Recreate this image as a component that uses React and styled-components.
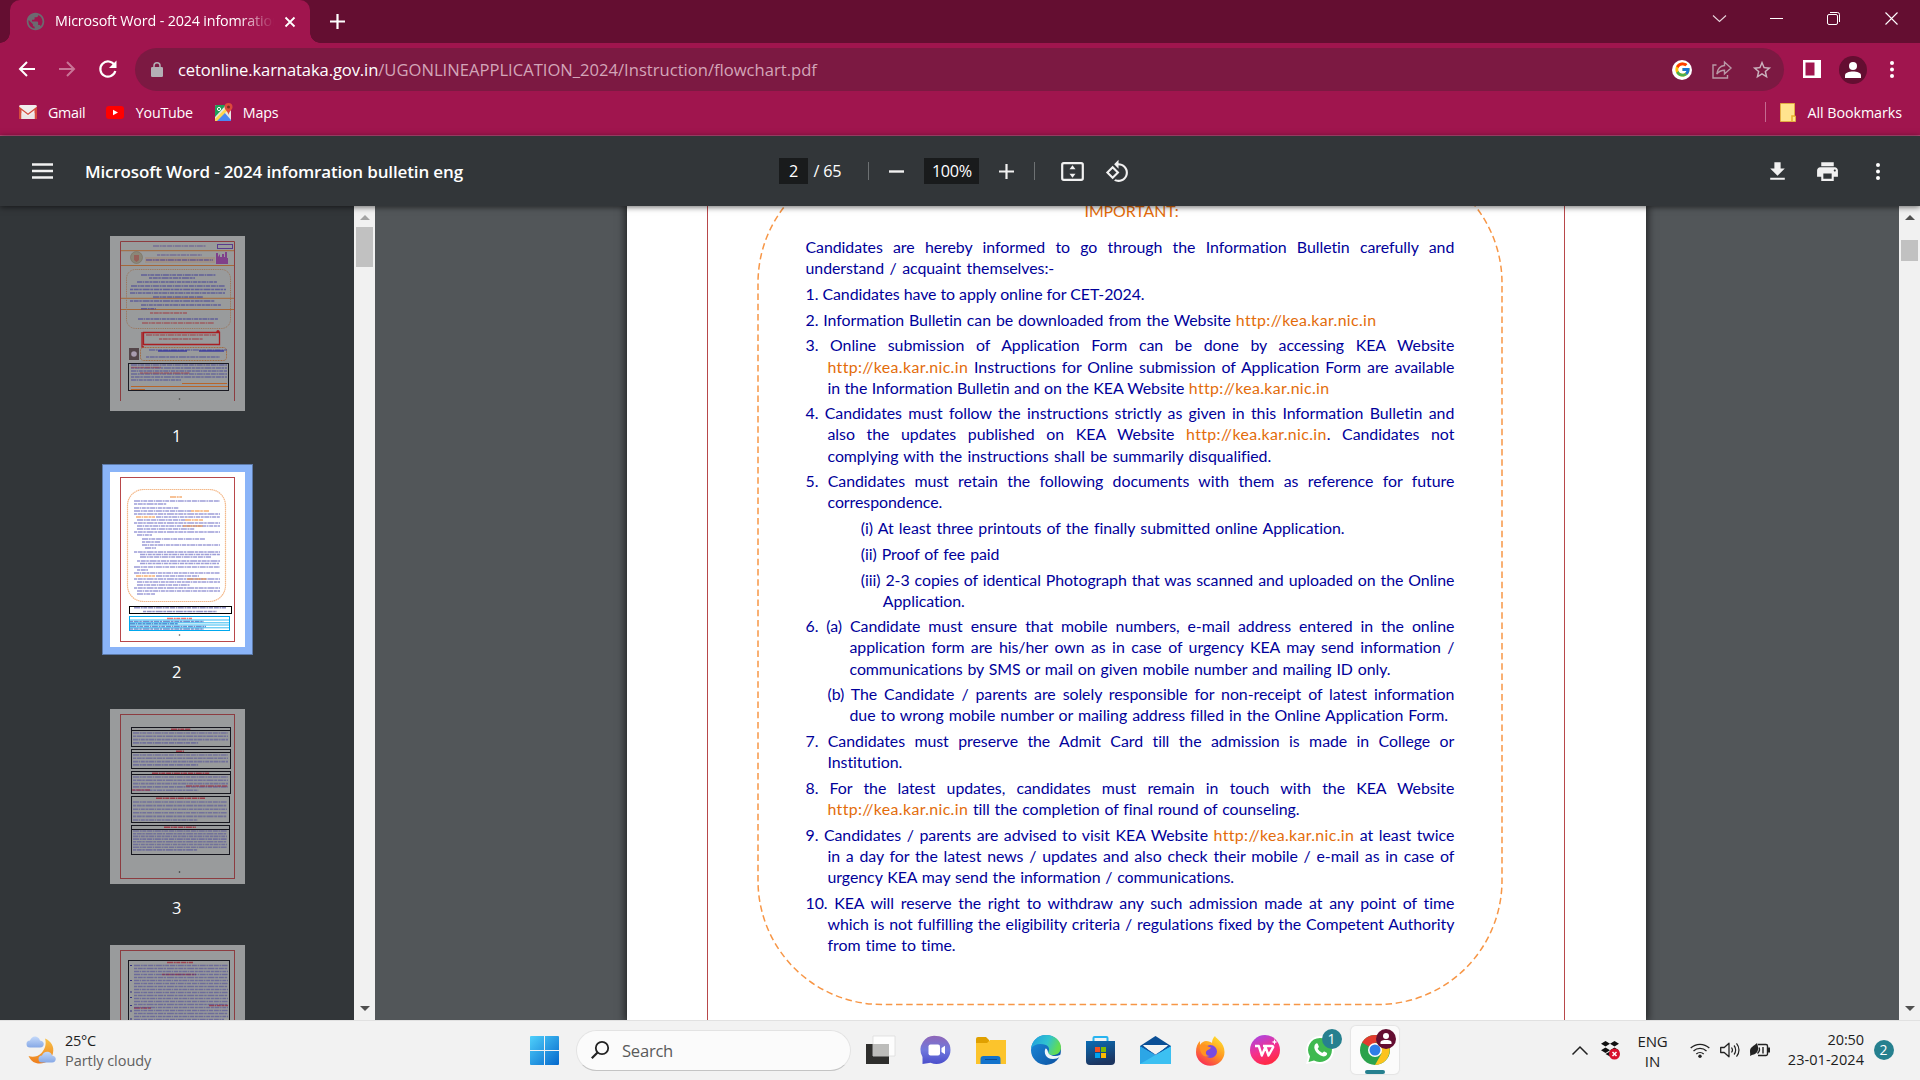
import React from "react";
import styled, { createGlobalStyle, css } from "styled-components";
import { FcGoogle } from "react-icons/fc";
import { MdPublic, MdStarBorder, MdPrint } from "react-icons/md";

const Global = createGlobalStyle`
  * { box-sizing: border-box; }
  body { margin: 0; overflow: hidden; }
`;
const ui = `"Open Sans", "Noto Sans", sans-serif`;

const Screen = styled.div`
  width: 1920px;
  height: 1080px;
  display: flex;
  flex-direction: column;
  overflow: hidden;
  font-family: ${ui};
  color: #fff;
  background: #525659;
`;

/* shared */
const Ico = styled.svg`
  display: block;
  flex: none;
  width: ${(p) => p.$w}px;
  height: ${(p) => p.$h || p.$w}px;
  margin-left: ${(p) => p.$ml || 0}px;
  margin-top: ${(p) => p.$mt || 0}px;
  overflow: visible;
`;
const Text = styled.span`
  flex: none;
  white-space: nowrap;
  font-size: ${(p) => p.$size || 14.3}px;
  letter-spacing: ${(p) => p.$ls || 0}px;
  margin-left: ${(p) => p.$ml || 0}px;
  font-weight: ${(p) => p.$weight || 400};
`;
const Spacer = styled.div`
  flex: 1;
`;

/* browser chrome */
const TabStrip = styled.div`
  height: 43px;
  flex: none;
  display: flex;
  align-items: center;
  background: #640e31;
  padding: 0 22px 0 10px;
`;
const Tab = styled.div`
  position: relative;
  width: 300px;
  height: 43px;
  display: flex;
  align-items: center;
  padding-left: 14.5px;
  background: #a0154e;
  border-radius: 10px 10px 0 0;
  &::before,
  &::after {
    content: "";
    position: absolute;
    bottom: 0;
    width: 10px;
    height: 10px;
  }
  &::before {
    left: -10px;
    background: radial-gradient(circle at 0 0, #640e31 9.5px, #a0154e 10px);
  }
  &::after {
    right: -10px;
    background: radial-gradient(circle at 100% 0, #640e31 9.5px, #a0154e 10px);
  }
`;
const TabTitle = styled.div`
  width: 219px;
  margin-left: 9.5px;
  overflow: hidden;
  white-space: nowrap;
  font-size: 14.3px;
  letter-spacing: -0.15px;
  line-height: 22px;
  padding-bottom: 2px;
  -webkit-mask-image: linear-gradient(90deg, #000 84%, transparent 100%);
  mask-image: linear-gradient(90deg, #000 84%, transparent 100%);
`;
const NavBar = styled.div`
  height: 48px;
  flex: none;
  display: flex;
  align-items: center;
  padding: 5px 26px 0 19px;
  background: #a0154e;
`;
const UrlBar = styled.div`
  width: 1650px;
  height: 43px;
  margin-left: 18px;
  display: flex;
  align-items: center;
  padding: 0 11px 0 16px;
  border-radius: 22px;
  background: #7c1942;
  color: #fff;
`;
const UrlPath = styled.span`
  color: #d3a5b8;
  letter-spacing: 0;
`;
const GBadge = styled.div`
  width: 20px;
  height: 20px;
  border-radius: 50%;
  background: #fff;
  display: flex;
  align-items: center;
  justify-content: center;
`;
const StarSlot = styled.div`
  display: flex;
  margin-left: 19px;
`;
const Avatar = styled.div`
  width: 28px;
  height: 28px;
  margin-left: 18px;
  border-radius: 50%;
  background: #640e31;
  display: flex;
  align-items: center;
  justify-content: center;
`;
const Bookmarks = styled.div`
  height: 45px;
  flex: none;
  display: flex;
  align-items: center;
  padding: 0 18px 2px 19px;
  background: #a0154e;
  border-bottom: 1px solid #b94a78;
`;
const VLine = styled.div`
  width: 1px;
  height: ${(p) => p.$h}px;
  margin-left: ${(p) => p.$ml || 0}px;
  background: ${(p) => p.$c};
`;

/* pdf toolbar */
const PdfBar = styled.div`
  position: relative;
  z-index: 2;
  height: 70px;
  flex: none;
  display: flex;
  align-items: center;
  background: #323639;
  box-shadow: 0 1px 6px rgba(0, 0, 0, 0.6);
`;
const BarZone = styled.div`
  display: flex;
  align-items: center;
  width: ${(p) => p.$w}px;
`;
const Field = styled.div`
  width: ${(p) => p.$w}px;
  height: 26px;
  margin-left: ${(p) => p.$ml || 0}px;
  background: #191b1c;
  text-align: center;
  line-height: 26px;
  font-size: 16.2px;
  letter-spacing: -0.3px;
`;
const PrintSlot = styled.div`
  display: flex;
  margin-left: 25px;
`;

/* main body */
const Body = styled.div`
  height: 814px;
  flex: none;
  display: flex;
`;
const Sidebar = styled.div`
  width: 354px;
  overflow: hidden;
  background: #323639;
  padding: 30px 0 0 110px;
`;
const ThumbItem = styled.div`
  width: 135px;
  height: 236.4px;
  display: flex;
  flex-direction: column;
  align-items: center;
`;
const ThumbBox = styled.div`
  width: 135px;
  height: 175px;
  background: ${(p) => (p.$on ? "#fff" : "#999b9c")};
  ${(p) => p.$on && css`box-shadow: 0 0 0 7px #8ab4f8, 0 0 0 8px #5d7aa8;`}
`;
const ThumbNo = styled.div`
  margin-top: 12.5px;
  margin-right: 1.5px;
  line-height: 24px;
  font-size: 16.4px;
`;
const Scroll = styled.div`
  width: 21px;
  background: #f1f1f1;
  display: flex;
  flex-direction: column;
  align-items: center;
  padding: 9px 0 9px;
`;
const Grip = styled.div`
  width: 17px;
  height: ${(p) => p.$h}px;
  margin-top: ${(p) => p.$mt}px;
  background: #c1c1c1;
`;
const Viewer = styled.div`
  width: 1524px;
  background: #525659;
  padding-left: 252px;
  overflow: hidden;
`;
const Page = styled.div`
  width: 1019px;
  height: 814px;
  padding: 0 81px 0 80px;
  background: #fff;
  box-shadow: 0 0 8px 2px rgba(0, 0, 0, 0.6);
`;
const PageFrame = styled.div`
  position: relative;
  display: flow-root;
  height: 814px;
  border: solid #b8474a;
  border-width: 0 1px;
  padding-left: 97.5px;
`;
const DashedBox = styled.svg`
  position: absolute;
  left: 0;
  top: 0;
  width: 855px;
  height: 814px;
`;
const Doc = styled.div`
  position: relative;
  width: 649px;
  font-family: Lato, "Liberation Sans", sans-serif;
  font-size: 15.9px;
  line-height: 21.1px;
  letter-spacing: -0.05px;
  color: #00009a;
`;
const Heading = styled.div`
  width: 91px;
  margin: -6px 0 15.1px 279px;
  color: #e36c0a;
  text-align-last: justify;
`;
const Para = styled.div`
  margin-bottom: 4.63px;
`;
const Line = styled.div`
  margin-left: ${(p) => p.$in}px;
  width: ${(p) => p.$r - p.$in}px;
  white-space: nowrap;
  text-align: justify;
  text-align-last: justify;
`;
const Link = styled.span`
  color: #e36c0a;
  letter-spacing: 0.36px;
`;

/* taskbar */
const Taskbar = styled.div`
  position: relative;
  z-index: 3;
  height: 60px;
  flex: none;
  display: flex;
  align-items: center;
  background: #f2f2f2;
  border-top: 1px solid #e1e1e1;
  color: #1d1d1d;
  padding-bottom: 1px;
`;
const Stack = styled.div`
  display: flex;
  flex-direction: column;
  flex: none;
  width: ${(p) => p.$w}px;
  margin-left: ${(p) => p.$ml}px;
  padding-top: ${(p) => p.$pt || 0}px;
  align-items: ${(p) => p.$align || "flex-start"};
  line-height: 20px;
`;
const Muted = styled(Text)`
  color: #606060;
`;
const SearchPill = styled.div`
  width: 275px;
  height: 41px;
  margin-left: 17px;
  border-radius: 21px;
  border: 1px solid #e3e3e3;
  border-bottom-color: #c4c4c4;
  background: #fbfbfb;
  display: flex;
  align-items: center;
  padding-left: 14px;
  color: #5a5a5a;
`;
const AppTile = styled.div`
  position: relative;
  width: 48px;
  height: 48px;
  margin-left: 17.5px;
  border-radius: 5px;
  background: #fbfbfb;
  box-shadow: 0 0 1px 1px #e4e4e4;
  display: flex;
  align-items: center;
  padding-left: 9px;
  &::after {
    content: "";
    position: absolute;
    left: 14px;
    bottom: 0;
    width: 20px;
    height: 4px;
    border-radius: 2px;
    background: #26808f;
  }
`;
const AppWrap = styled.div`
  position: relative;
  margin-left: ${(p) => p.$ml}px;
`;
const Badge = styled.div`
  width: 20px;
  height: 20px;
  border-radius: 50%;
  background: #26808f;
  color: #fff;
  font-size: 14px;
  line-height: 20px;
  text-align: center;
  margin-left: ${(p) => p.$ml || 0}px;
  ${(p) => p.$over && css`position: absolute; right: -8px; top: -7px;`}
`;

const FULL = 648.8;
const A = () => <Link>http://kea.kar.nic.in</Link>;
const paras = [
  [[0, FULL, "Candidates are hereby informed to go through the Information Bulletin carefully and"], [0, 248.7, "understand / acquaint themselves:-"]],
  [[0, 339, "1. Candidates have to apply online for CET-2024."]],
  [[0, 571, <>2. Information Bulletin can be downloaded from the Website <A /></>]],
  [
    [0, FULL, "3. Online submission of Application Form can be done by accessing KEA Website"],
    [22, FULL, <><A /> Instructions for Online submission of Application Form are available</>],
    [22, 524, <>in the Information Bulletin and on the KEA Website <A /></>],
  ],
  [
    [0, FULL, "4. Candidates must follow the instructions strictly as given in this Information Bulletin and"],
    [22, FULL, <>also the updates published on KEA Website <A />. Candidates not</>],
    [22, 465.6, "complying with the instructions shall be summarily disqualified."],
  ],
  [[0, FULL, "5. Candidates must retain the following documents with them as reference for future"], [22, 139, "correspondence."]],
  [[55.3, 539, "(i) At least three printouts of the finally submitted online Application."]],
  [[55.3, 194, "(ii) Proof of fee paid"]],
  [[55.3, FULL, "(iii) 2-3 copies of identical Photograph that was scanned and uploaded on the Online"], [77.3, 160, "Application."]],
  [
    [0, FULL, "6. (a) Candidate must ensure that mobile numbers, e-mail address entered in the online"],
    [44, FULL, "application form are his/her own as in case of urgency KEA may send information /"],
    [44, 585, "communications by SMS or mail on given mobile number and mailing ID only."],
  ],
  [
    [22, FULL, "(b) The Candidate / parents are solely responsible for non-receipt of latest information"],
    [44, 642.5, "due to wrong mobile number or mailing address filled in the Online Application Form."],
  ],
  [[0, FULL, "7. Candidates must preserve the Admit Card till the admission is made in College or"], [22, 98, "Institution."]],
  [[0, FULL, "8. For the latest updates, candidates must remain in touch with the KEA Website"], [22, 494, <><A /> till the completion of final round of counseling.</>]],
  [
    [0, FULL, <>9. Candidates / parents are advised to visit KEA Website <A /> at least twice</>],
    [22, FULL, "in a day for the latest news / updates and also check their mobile / e-mail as in case of"],
    [22, 428.5, "urgency KEA may send the information / communications."],
  ],
  [
    [0, FULL, "10. KEA will reserve the right to withdraw any such admission made at any point of time"],
    [22, FULL, "which is not fulfilling the eligibility criteria / regulations fixed by the Competent Authority"],
    [22, 150, "from time to time."],
  ],
];

const dashes = ["6 .7 2 .6 4 .8 5 .7 1.5 .6", "3 .7 5 .6 2.5 .8 7 .7", "5 .6 1.5 .7 4 .7 3 .6"];
const Rows = ({ rows, color = "#3a3898", o = 0.42 }) =>
  rows.map(([x, y, w, c], i) => (
    <line key={i} x1={x} x2={x + w} y1={y} y2={y} stroke={c || color} strokeOpacity={o} strokeWidth="1.6" strokeDasharray={dashes[i % 3]} />
  ));
const block = (x, y, w, n, gap, last) => Array.from({ length: n }, (_, i) => [x, y + i * gap, i === n - 1 && last ? last : w]);

const Thumb1 = () => (
  <svg width="135" height="175" viewBox="0 0 135 175">
    <path d="M10.500 165V5.500h114V165" fill="none" stroke="#8c3c40" />
    <Rows rows={[[43, 10, 53, "#5a4a8c"], [47, 19, 45, "#5a4a8c"]]} o={0.55} />
    <rect x="35" y="21" width="70" height="6" fill="#a58a78" opacity=".6" />
    <Rows rows={[[36, 24, 67, "#463c96"]]} o={0.65} />
    <rect x="107.500" y="8.500" width="15" height="4" fill="none" stroke="#5a3c8c" />
    <path d="M11 14.700h113M11 29.500h113M11 62.300h113M11 73.500h113" stroke="#a5683a" />
    <circle cx="26.500" cy="21.500" r="6" fill="#8b8678" stroke="#77705f" strokeWidth=".6" />
    <path d="M24 19h5v5l-2.500 2-2.500-2z" fill="#96605a" />
    <path d="M106 28V17h2v4l2-3v3h2v-3h2v3h1v-5h2v6h1v6z" fill="#80408a" />
    <rect x="16.500" y="33.500" width="104" height="59" rx="9" fill="none" stroke="#9c7458" strokeDasharray="1 .8" />
    <Rows rows={[[31, 39, 75], [39, 42, 46], [27, 46, 80], [21, 50, 94], [20, 53.500, 96], [20, 57, 95], [43, 61, 50], [20, 65, 85], [31, 69, 80], [31, 72.700, 15], [40, 77, 37, "#a03038"], [28, 83, 80], [32, 87, 72, "#a03038"]]} o={0.6} />
    <path d="M33.500 96.500h76v12h-76zM32 96v15h2" fill="none" stroke="#a91e22" strokeWidth="1.300" />
    <circle cx="108" cy="95.500" r="1.600" fill="#a91e22" />
    <Rows rows={[[36, 99, 70, "#a03038"], [49, 103, 44, "#a03038"]]} o={0.6} />
    <rect x="19" y="112" width="10" height="12" fill="#54464a" />
    <circle cx="24" cy="118" r="2.800" fill="#a99cb0" />
    <rect x="30.500" y="111.500" width="86" height="13" rx="3" fill="none" stroke="#a5683a" strokeDasharray="1 .6" />
    <Rows rows={[[39, 114, 78], [36, 121, 74]]} o={0.5} />
    <path d="M48 115h29M89 115h25" stroke="#1414a0" />
    <rect x="18.500" y="127.500" width="100" height="27" fill="none" stroke="#1a1a22" />
    <Rows rows={[...block(21, 129, 96, 6, 3, 50), [21, 131.500, 30, "#a03038"], [30, 137, 50, "#a03038"]]} o={0.5} />
    <path d="M72 147.500h45M21 150.500h97M21 153.500h14" stroke="#b8652a" />
    <circle cx="69.500" cy="163" r=".8" fill="#444" />
  </svg>
);
const thumb2 = [
  [24, 29, 86], [24, 32, 33], [24, 36, 45], [24, 39, 57], [24, 42, 86], [46, 45, 64], [27, 48, 48], [24, 51, 86], [27, 54, 83], [27, 57, 58], [24, 60, 86], [27, 63, 15],
  [32, 67, 63], [32, 70, 18], [32, 73, 78], [35, 76, 11], [24, 80, 86], [30, 82.500, 80], [30, 85, 71], [27, 89, 83], [30, 91.500, 79], [24, 95, 86], [27, 98, 11], [24, 101, 86],
  [46, 104, 43], [24, 107, 86], [27, 110, 83], [27, 113, 53], [24, 116, 86], [27, 119, 83], [27, 122, 18],
];
const Thumb2 = () => (
  <svg width="135" height="175" viewBox="0 0 135 175">
    <rect x="10.500" y="5.500" width="114" height="164" fill="none" stroke="#b8474a" />
    <rect x="17.500" y="17.500" width="98" height="112" rx="16" fill="none" stroke="#f4b98a" strokeWidth="1.200" strokeDasharray="1.500 .5" />
    <Rows rows={thumb2} color="#2a2aa8" o={0.46} />
    <Rows rows={[[60, 25, 12], [81, 39, 18], [26, 45, 19], [75, 48, 18], [73, 54, 20], [26, 104, 19], [77, 107, 20]]} color="#f08a38" o={0.7} />
    <rect x="19.500" y="134.500" width="102" height="7" fill="none" stroke="#000" />
    <Rows rows={[[24, 135.700, 92], [33, 139.500, 74]]} color="#2a2a90" o={0.5} />
    <rect x="19.500" y="144.500" width="100" height="14" fill="none" stroke="#00a8ee" />
    <Rows rows={[[57, 146.500, 25, "#e03030"], [20, 149.500, 74], [20, 151.700, 48], [20, 154.500, 76], [20, 157, 74]]} color="#2a50b0" o={0.65} />
    <path d="M20 148h99M20 150.800h99M20 153h99M20 155.800h99" stroke="#00a8ee" strokeWidth=".8" />
    <circle cx="69.500" cy="163" r=".8" fill="#555" />
  </svg>
);
const t3 = [[21, 18.500, 99, 19, 3.300, 4], [21, 40.500, 99, 19, 3.300, 4], [21, 62.500, 99, 22, 3.300, 5], [21, 87.500, 98, 26, 3.600, 6], [21, 116.500, 98, 29, 2.700, 8]];
const t3heads = [[61, 20], [66, 8], [42, 58], [46, 49], [54, 32]];
const Thumb3 = () => (
  <svg width="135" height="175" viewBox="0 0 135 175">
    <rect x="10.500" y="5.500" width="114" height="164" fill="none" stroke="#8c3c40" />
    {t3.map(([x, y, w, h, g, n], i) => (
      <g key={i}>
        <rect x={x + 0.5} y={y} width={w} height={h} fill="none" stroke="#16161e" />
        <path d={`M${x} ${y + (i > 3 ? 4 : 3)}h${w}`} stroke="#16161e" strokeWidth={i === 3 ? 0 : 1} />
        <Rows rows={[[t3heads[i][0], y + 1.700, t3heads[i][1], "#a02030"]]} o={0.75} />
        <Rows rows={block(x + 2, y + 5.500, w - 4, n, g, w * 0.66)} />
      </g>
    ))}
    <Rows rows={[[76, 77, 42, "#a02030"], [22, 81, 18, "#a02030"]]} o={0.6} />
    <circle cx="69.500" cy="163" r=".8" fill="#333" />
  </svg>
);
const Thumb4 = () => (
  <svg width="135" height="175" viewBox="0 0 135 175">
    <rect x="10.500" y="5.500" width="114" height="164" fill="none" stroke="#8c3c40" />
    <rect x="18.500" y="15.500" width="101" height="150" fill="none" stroke="#16161e" />
    <Rows rows={[[57, 17.500, 26, "#a02030"], [52, 29.500, 34, "#a02030"], [99, 60.500, 19, "#a02030"], [24, 63, 17, "#a02030"]]} o={0.7} />
    <Rows rows={block(24, 20.500, 94, 19, 3, 90)} o={0.48} />
    <path d="M20 20.500h2M20 35.500h2M20 47h2M20 52.500h2M20 60.500h2M20 66h2M20 74h2" stroke="#333080" />
  </svg>
);

const Up = ({ c = "#505050" }) => <Ico viewBox="0 0 10 5" $w={10} $h={5}><path d="M0 5L5 0l5 5z" fill={c} /></Ico>;
const Down = () => <Ico viewBox="0 0 10 5" $w={10} $h={5}><path d="M0 0L5 5l5-5z" fill="#505050" /></Ico>;
const Dots = ({ ml, h = 17 }) => (
  <Ico viewBox={`0 0 4 ${h}`} $w={4} $h={h} $ml={ml}>
    {[2, h / 2, h - 2].map((y) => <circle key={y} cx="2" cy={y} r="2" fill="#fff" />)}
  </Ico>
);
const Person = ({ size }) => (
  <svg width={size} height={size} viewBox="0 0 16 16"><circle cx="8" cy="4" r="4" fill="#fff" /><path d="M0 16v-2.500C0 10.500 4 9.500 8 9.500s8 1 8 4V16z" fill="#fff" /></svg>
);

export default function App() {
  return (
    <Screen>
      <Global />
      <TabStrip>
        <Tab>
          <MdPublic size={21} color="#6c6a70" />
          <TabTitle>Microsoft Word - 2024 infomration bulletin</TabTitle>
          <Ico viewBox="0 0 10 10" $w={10} $ml={11}><path d="M.5.500l9 9M9.500.500l-9 9" stroke="#fff" strokeWidth="1.800" /></Ico>
        </Tab>
        <Ico viewBox="0 0 15 15" $w={15} $ml={20}><path d="M7.500 0v15M0 7.500h15" stroke="#fff" strokeWidth="2.200" /></Ico>
        <Spacer />
        <Ico viewBox="0 0 13 7" $w={13} $h={7} $mt={-6}><path d="M0 .5l6.500 6L13 .5" fill="none" stroke="#e8d5dd" strokeWidth="1.100" /></Ico>
        <Ico viewBox="0 0 13 2" $w={13} $h={2} $ml={44} $mt={-5}><path d="M0 .5h13" stroke="#fff" /></Ico>
        <Ico viewBox="0 0 13 13" $w={13} $ml={44} $mt={-6}>
          <rect x=".5" y="2.500" width="10" height="10" rx="1.500" fill="none" stroke="#fff" />
          <path d="M3 .5h7.500a2 2 0 012 2V10" fill="none" stroke="#fff" />
        </Ico>
        <Ico viewBox="0 0 13 13" $w={13} $ml={45} $mt={-6}><path d="M.5.500l12 12M12.500.500l-12 12" stroke="#fff" strokeWidth="1.100" /></Ico>
      </TabStrip>

      <NavBar>
        <Ico viewBox="0 0 16 16" $w={16} $mt={-1}><path d="M8 1L1 8l7 7M1 8h15" fill="none" stroke="#fff" strokeWidth="2" /></Ico>
        <Ico viewBox="0 0 16 16" $w={16} $ml={24} $mt={-1}><path d="M8 1l7 7-7 7M15 8H0" fill="none" stroke="#c97597" strokeWidth="2" /></Ico>
        <Ico viewBox="0 0 18 18" $w={18} $ml={24} $mt={-1}>
          <path d="M15.500 5.200A7.600 7.600 0 1016.300 11" fill="none" stroke="#fff" strokeWidth="2.200" />
          <path d="M17.500.500v7.500H10z" fill="#fff" />
        </Ico>
        <UrlBar>
          <Ico viewBox="0 0 12 15" $w={12} $h={15}>
            <rect y="5" width="12" height="10" rx="1.300" fill="#b4b0b5" />
            <path d="M3 6V3.800a3 3 0 016 0V6" fill="none" stroke="#b4b0b5" strokeWidth="1.500" />
          </Ico>
          <Text $size={16.6} $ml={15} $ls={-0.11}>cetonline.karnataka.gov.in<UrlPath>/UGONLINEAPPLICATION_2024/Instruction/flowchart.pdf</UrlPath></Text>
          <Spacer />
          <GBadge><FcGoogle size={17} /></GBadge>
          <Ico viewBox="0 0 20 18" $w={20} $h={18} $ml={20}>
            <path d="M4.500 4H1v13h14.500v-3" fill="none" stroke="#b999a7" strokeWidth="1.400" />
            <path d="M12.500 1v3.500C8 5 5.500 8 4.800 13c2-2.700 4.500-3.800 7.700-3.800V13l6.500-6z" fill="none" stroke="#b999a7" strokeWidth="1.400" />
          </Ico>
          <StarSlot><MdStarBorder size={22} color="#cbb3be" /></StarSlot>
        </UrlBar>
        <Ico viewBox="0 0 18 18" $w={18} $ml={19} $mt={-1}><path d="M0 0h18v18H0zM2.500 2.500v13h9v-13z" fill="#fff" fillRule="evenodd" /></Ico>
        <Avatar><Person size={16} /></Avatar>
        <Dots ml={23} />
      </NavBar>

      <Bookmarks>
        <Ico viewBox="0 0 18 14" $w={18} $h={14}>
          <rect width="18" height="14" rx="1.500" fill="#f1eded" />
          <path d="M0 14V1.500L9 8.500l9-7V14h-2.500V5L9 10 2.500 5v9z" fill="#d54b3d" />
          <path d="M2.500 14V8L9 11l6.500-3v6z" fill="#ece6e6" />
        </Ico>
        <Text $ml={11} $ls={-0.3}>Gmail</Text>
        <Ico viewBox="0 0 18 13" $w={18} $h={13} $ml={21}><rect width="18" height="13" rx="3" fill="#f00" /><path d="M7 3.700v5.600l5-2.800z" fill="#fff" /></Ico>
        <Text $ml={11.5} $ls={-0.25}>YouTube</Text>
        <Ico viewBox="0 0 18 18" $w={18} $ml={22}>
          <rect y="2" width="16" height="16" rx="1.500" fill="#e8e6e2" />
          <path d="M0 3.500A1.500 1.500 0 011.500 2H11L0 14z" fill="#1f9d58" />
          <path d="M1 17.500L9 9l7 8v1H2z" fill="#4a89f3" />
          <path d="M0 16L12 4l2 2L2 18H0z" fill="#fdd650" />
          <path d="M13.500 0a4 4 0 00-4 4c0 3 3.500 4 4 8 .5-4 4-5 4-8a4 4 0 00-4-4z" fill="#dc4a3d" />
          <circle cx="13.500" cy="4" r="1.500" fill="#7d2a24" />
          <circle cx="4" cy="6" r="1.600" fill="none" stroke="#fff" />
        </Ico>
        <Text $ml={10} $ls={-0.2}>Maps</Text>
        <Spacer />
        <VLine $h={20} $c="#c46a90" />
        <Ico viewBox="0 0 16 19" $w={16} $h={19} $ml={14}>
          <path d="M.5.500h14V13h1v5.500H.5z" fill="#ffe48e" stroke="#e2ad42" />
          <path d="M12 18v-5h3" fill="none" stroke="#e8ae2c" strokeWidth="1.500" />
        </Ico>
        <Text $ml={12} $ls={-0.06}>All Bookmarks</Text>
      </Bookmarks>

      <PdfBar>
        <BarZone $w={779}>
          <Ico viewBox="0 0 21 16" $w={21} $h={16} $ml={32}><path d="M0 1.500h21M0 8h21M0 14.500h21" stroke="#f1f1f1" strokeWidth="2.600" /></Ico>
          <Text $ml={32} $size={17} $weight={600} $ls={-0.14}>Microsoft Word - 2024 infomration bulletin eng</Text>
        </BarZone>
        <BarZone $w={950}>
          <Field $w={29}>2</Field>
          <Text $ml={5.5} $size={16.2} $ls={-0.2}>/ 65</Text>
          <VLine $h={18} $ml={27} $c="#6d7173" />
          <Ico viewBox="0 0 15 3" $w={15} $h={3} $ml={20}><path d="M0 1.500h15" stroke="#f1f1f1" strokeWidth="2.400" /></Ico>
          <Field $w={55} $ml={20}>100%</Field>
          <Ico viewBox="0 0 15 15" $w={15} $ml={20}><path d="M7.500 0v15M0 7.500h15" stroke="#f1f1f1" strokeWidth="2.200" /></Ico>
          <VLine $h={18} $ml={20} $c="#6d7173" />
          <Ico viewBox="0 0 23 19" $w={23} $h={19} $ml={26}>
            <rect x="1.200" y="1.200" width="20.600" height="16.600" rx="1.500" fill="none" stroke="#f1f1f1" strokeWidth="2.200" />
            <path d="M11.500 3.200l3 4h-6zM11.500 15.800l3-4h-6z" fill="#f1f1f1" />
          </Ico>
          <Ico viewBox="0 0 24 24" $w={25} $ml={21}>
            <path d="M7.340 6.410L.86 12.900l6.490 6.480 6.490-6.480-6.500-6.490zM3.690 12.900l3.660-3.660L11 12.900l-3.660 3.660-3.650-3.660zm15.670-6.260C17.610 4.880 15.300 4 13 4V.76L8.760 5 13 9.240V6c1.790 0 3.580.68 4.950 2.050 2.730 2.730 2.730 7.170 0 9.900C16.580 19.320 14.790 20 13 20c-.97 0-1.940-.21-2.840-.61l-1.490 1.490C10.020 21.620 11.510 22 13 22c2.300 0 4.610-.88 6.360-2.640 3.520-3.510 3.520-9.210 0-12.720z" fill="#f1f1f1" />
          </Ico>
        </BarZone>
        <Ico viewBox="0 0 24 24" $w={25} $ml={36}><path d="M19 9h-4V3H9v6H5l7 7 7-7zM5 18v2h14v-2H5z" fill="#f1f1f1" /></Ico>
        <PrintSlot><MdPrint size={25} color="#f1f1f1" /></PrintSlot>
        <Dots ml={36} />
      </PdfBar>

      <Body>
        <Sidebar>
          <ThumbItem><ThumbBox><Thumb1 /></ThumbBox><ThumbNo>1</ThumbNo></ThumbItem>
          <ThumbItem><ThumbBox $on><Thumb2 /></ThumbBox><ThumbNo>2</ThumbNo></ThumbItem>
          <ThumbItem><ThumbBox><Thumb3 /></ThumbBox><ThumbNo>3</ThumbNo></ThumbItem>
          <ThumbItem><ThumbBox><Thumb4 /></ThumbBox></ThumbItem>
        </Sidebar>
        <Scroll><Up c="#a3a3a3" /><Grip $h={40} $mt={7} /><Spacer /><Down /></Scroll>
        <Viewer>
          <Page>
            <PageFrame>
              <DashedBox viewBox="0 0 855 814">
                <rect x="50" y="-47" width="744" height="845.500" rx="124" fill="none" stroke="#f79646" strokeWidth="1.500" strokeDasharray="6.500 3.700" />
              </DashedBox>
              <Doc>
                <Heading>IMPORTANT:</Heading>
                {paras.map((lines, i) => (
                  <Para key={i}>
                    {lines.map(([ind, r, t], j) => <Line key={j} $in={ind} $r={r}>{t}</Line>)}
                  </Para>
                ))}
              </Doc>
            </PageFrame>
          </Page>
        </Viewer>
        <Scroll><Up /><Grip $h={21} $mt={20} /><Spacer /><Down /></Scroll>
      </Body>

      <Taskbar>
        <Ico viewBox="0 0 30 28" $w={30} $h={28} $ml={26}>
          <defs>
            <linearGradient id="moon" x2="0" y2="1"><stop stopColor="#f7c24a" /><stop offset="1" stopColor="#ee7d1c" /></linearGradient>
            <linearGradient id="cloud" x2="0" y2="1"><stop stopColor="#c4d9fa" /><stop offset="1" stopColor="#86a8e6" /></linearGradient>
          </defs>
          <path d="M19 2.500c6 2.500 9.500 8 8 14.500-1.500 8-9.500 12-17 10-4-1-6-4-7.500-7 4 1.500 9 1 13-3 4-4.500 5-9.500 3.500-14.500z" fill="url(#moon)" />
          <path d="M4 11.500a3.500 3.500 0 010-7C5 1.500 8-.5 11 1c2 .8 2.500 2 3 3.500 5 .3 5 7 0 7z" fill="url(#cloud)" />
          <path d="M16 26.500a3.500 3.500 0 010-7c1-3 4-4.500 7-3.500 2 .8 2.800 2 3 3.500 5 .3 5 7 0 7z" fill="url(#cloud)" />
        </Ico>
        <Stack $w={100} $ml={9} $pt={2}>
          <Text $size={14.5} $ls={-0.3}>25°C</Text>
          <Muted $size={14.5} $ls={-0.05}>Partly cloudy</Muted>
        </Stack>
        <Ico viewBox="0 0 29 29" $w={29} $ml={365}>
          <defs><linearGradient id="win" x2="1" y2="1"><stop stopColor="#4fd0fb" /><stop offset="1" stopColor="#0568cc" /></linearGradient></defs>
          <path d="M0 1a1 1 0 011-1h13v14H0zM15 0h13a1 1 0 011 1v13H15zM0 15h14v14H1a1 1 0 01-1-1zM15 15h14v13a1 1 0 01-1 1H15z" fill="url(#win)" />
        </Ico>
        <SearchPill>
          <Ico viewBox="0 0 18 18" $w={18}><circle cx="11" cy="7" r="6.200" fill="none" stroke="#222" strokeWidth="1.800" /><path d="M6.500 11.500L.8 17.200" stroke="#222" strokeWidth="2.200" /></Ico>
          <Text $size={16.6} $ml={13} $ls={-0.25}>Search</Text>
        </SearchPill>
        <Ico viewBox="0 0 30 28" $w={30} $h={28} $ml={15}>
          <path d="M0 8h23v20H0z" fill="#2e2e2c" /><path d="M7 0h22v20H7z" fill="#fdfdfd" stroke="#dcdcdc" strokeWidth=".8" /><path d="M7 8h16v12H7z" fill="#bcbcba" />
        </Ico>
        <Ico viewBox="0 0 29 28" $w={29} $h={28} $ml={25.5}>
          <defs><linearGradient id="chat" x2="0" y2="1"><stop stopColor="#8f67b8" /><stop offset=".5" stopColor="#7079dd" /><stop offset="1" stopColor="#4a4ecb" /></linearGradient></defs>
          <path d="M14.500 0a14 14 0 110 28c-2 0-4-.4-6-1.300L.5 28v-7A14 14 0 0114.500 0z" fill="url(#chat)" />
          <rect x="6.500" y="8.500" width="11.500" height="11" rx="2" fill="#fff" /><path d="M19.500 12l3.500-2.300v8.600L19.500 16z" fill="#fff" />
        </Ico>
        <Ico viewBox="0 0 30 27" $w={30} $h={27} $ml={25.5}>
          <path d="M0 2a2 2 0 012-2h8l3 3v4H0z" fill="#e0a000" /><path d="M0 6h11l3-3h16v24H0z" fill="#fcc42c" />
          <path d="M4.500 27v-5a3 3 0 013-3h14a3 3 0 013 3v5z" fill="#1373cc" /><path d="M9 22.500h12" stroke="#0c4c94" />
        </Ico>
        <Ico viewBox="0 0 30 30" $w={30} $ml={25}>
          <defs>
            <linearGradient id="e1" x2="1" y2=".3"><stop stopColor="#1f9ce0" /><stop offset=".6" stopColor="#30c3cf" /><stop offset="1" stopColor="#62dc52" /></linearGradient>
            <linearGradient id="e2" x2="1" y2="1"><stop stopColor="#1c8fe0" /><stop offset="1" stopColor="#0c4f9e" /></linearGradient>
          </defs>
          <circle cx="15" cy="15" r="15" fill="url(#e2)" />
          <path d="M0 14C1 5 7.500 0 15 0c9 0 15 6 15 12.500 0 5-4 7.500-8 7.500-3.500 0-5.500-1-5-2.500 1.800-2 1.500-6-2-7.500C9 8 2.500 9 0 14z" fill="url(#e1)" />
          <path d="M14.500 13.500c-2 4 0 10.500 7.500 10.500 3 0 5-.8 6.500-2 1.200 0 1.500-2 .5-2-5 2.500-12 0-12-3-.3-1.500-1-3.500-2.500-3.500z" fill="#eef5fa" />
        </Ico>
        <Ico viewBox="0 0 29 29" $w={29} $ml={24.5}>
          <defs><linearGradient id="store" x2=".3" y2="1"><stop stopColor="#0a6cb4" /><stop offset="1" stopColor="#1c3560" /></linearGradient></defs>
          <path d="M7.500 6V2a1 1 0 011-1h12a1 1 0 011 1v4" fill="none" stroke="#28b4f0" strokeWidth="2" />
          <path d="M0 5h29v20a4 4 0 01-4 4H4a4 4 0 01-4-4z" fill="url(#store)" />
          <path d="M9 11h5v5H9z" fill="#f25022" /><path d="M15 11h5v5h-5z" fill="#7fba00" /><path d="M9 17h5v5H9z" fill="#00a4ef" /><path d="M15 17h5v5h-5z" fill="#ffb900" />
        </Ico>
        <Ico viewBox="0 0 31 28" $w={31} $h={28} $ml={25.5}>
          <path d="M0 10L15.500 0 31 10v18H0z" fill="#0b4f96" /><path d="M3 9h25l-12.500 11z" fill="#f6f6f6" /><path d="M0 28V10l31 18z" fill="#2ca6e6" /><path d="M31 10v18H0z" fill="#3cc0f2" /><path d="M0 10l15.500 9L31 10l-2 0-13.500 8L2 10z" fill="#0b5cab" />
          <path d="M3 9.500h25L15.500 18.500z" fill="#f3f3f3" />
        </Ico>
        <Ico viewBox="0 0 29 29" $w={29} $ml={24.5}>
          <defs><linearGradient id="ff" x1=".8" x2=".2" y2="1"><stop stopColor="#ffe22e" /><stop offset=".5" stopColor="#ff9322" /><stop offset="1" stopColor="#f8245a" /></linearGradient></defs>
          <path d="M19 0c1 3 9.500 6 9.500 16a14 13.500 0 01-28.500 0c0-5 1.500-8.500 4-11v4c2-3 4-4 6-4 3 0 5 1 6 2 0-3 1-5 3-7z" fill="url(#ff)" />
          <circle cx="14.500" cy="15.500" r="6.500" fill="#7a4ae0" />
          <path d="M4 9c3-1 6-.5 8 1.500l3 1c-1 2-3 2-4.500 3.500-1.500 2 0 5 3 5C6 23 3 14 4 9z" fill="#ff9322" />
        </Ico>
        <Ico viewBox="0 0 30 30" $w={30} $ml={25.500}>
          <defs><linearGradient id="wps" x1="0" x2=".4" y2="1"><stop stopColor="#a04af0" /><stop offset=".6" stopColor="#f5308c" /><stop offset="1" stopColor="#ff2a48" /></linearGradient></defs>
          <circle cx="15" cy="15" r="15" fill="url(#wps)" />
          <path d="M5 11h3.800l3 9.500L15.500 12l3 8.500L23 12.500c.4-1-.2-1.500-1-1.500h-9" fill="none" stroke="#fff" strokeWidth="2.400" strokeLinejoin="round" />
          <path d="M24.500 4l.8 2.200 2.200.8-2.200.8-.8 2.200-.8-2.200-2.200-.8 2.200-.8z" fill="#fff" />
        </Ico>
        <AppWrap $ml={25.5}>
          <Ico viewBox="0 0 28 28" $w={28}>
            <path d="M14 0a14 14 0 11-6.500 26.400L0 28l2-7A14 14 0 0114 0z" fill="#fff" />
            <path d="M14 2a12 12 0 11-6 22.400L2.500 26 4 20.500A12 12 0 0114 2z" fill="#3fb950" />
            <path d="M9.500 8c1-1 2-.8 2.500.5l.8 2c.3 1-1.300 1.800-1 2.500a9 9 0 004.200 3.800c.8.200 1.500-1.600 2.300-1.300l2.400 1.200c1 .6.300 3-1.700 3.600-5 1.200-12-6-10.500-10.500.2-.7.500-1.300 1-1.800z" fill="#fff" />
          </Ico>
          <Badge $over>1</Badge>
        </AppWrap>
        <AppTile>
          <Ico viewBox="0 0 30 30" $w={30}>
            <circle cx="15" cy="15" r="15" fill="#2ba24c" />
            <path d="M15 15L2 7.500A15 15 0 0128 7.500H15z" fill="#e33b2e" />
            <path d="M15 8h13a15 15 0 01-13 22l6.500-11.500z" fill="#fcc31e" />
            <circle cx="15" cy="15" r="7" fill="#fff" /><circle cx="15" cy="15" r="5.500" fill="#2f7de8" />
            <circle cx="26" cy="4" r="10" fill="#640e31" />
            <g transform="translate(20.500 -2)"><circle cx="5.500" cy="3" r="3" fill="#fff" /><path d="M0 11V9.500C0 7.500 3 7 5.500 7S11 7.500 11 9.500V11z" fill="#fff" /></g>
          </Ico>
        </AppTile>
        <Ico viewBox="0 0 16 9" $w={16} $h={9} $ml={173}><path d="M.5 8.500L8 1l7.500 7.500" fill="none" stroke="#222" strokeWidth="1.500" /></Ico>
        <Ico viewBox="0 0 19 19" $w={19} $ml={12.5}>
          <path d="M4.500 0L9 2.800 4.500 5.600 0 2.800zM13.500 0L18 2.800l-4.500 2.800L9 2.800zM4.500 6.500L9 9.300l-4.500 2.800L0 9.300zM13.500 6.500L18 9.300 13.500 12 9 9.300zM4.500 13L9 10.500v5z" fill="#111" />
          <circle cx="13.500" cy="13" r="5.500" fill="#d8112c" /><path d="M11.500 11l4 4M15.500 11l-4 4" stroke="#fff" strokeWidth="1.500" />
        </Ico>
        <Stack $w={40} $ml={13} $align="center" $pt={1}>
          <Text $size={15} $ls={-0.2}>ENG</Text>
          <Text $size={15}>IN</Text>
        </Stack>
        <Ico viewBox="0 0 20 15" $w={20} $h={15} $ml={17}>
          <path d="M.7 5a13.500 13.500 0 0118.600 0M3.500 8a9.500 9.500 0 0113 0M6.300 11a5.500 5.500 0 017.400 0" fill="none" stroke="#222" strokeWidth="1.300" /><circle cx="10" cy="13.300" r="1.700" fill="#222" />
        </Ico>
        <Ico viewBox="0 0 20 16" $w={20} $h={16} $ml={10}>
          <path d="M.7 5.500h3.500L9 1.200v13.600l-4.800-4.300H.7z" fill="none" stroke="#222" strokeWidth="1.300" strokeLinejoin="round" />
          <path d="M11.500 5.500c1.200 1.500 1.200 3.500 0 5M14 3.500c2.200 2.500 2.200 6.500 0 9M16.500 1.300c3.300 4 3.300 9.400 0 13.400" fill="none" stroke="#222" strokeWidth="1.200" />
        </Ico>
        <Ico viewBox="0 0 20 14" $w={20} $h={14} $ml={10}>
          <path d="M8 1.500h8a1.500 1.500 0 011.500 1.500v8a1.500 1.500 0 01-1.500 1.500H8" fill="none" stroke="#222" strokeWidth="1.400" />
          <path d="M18 4.500h2v5h-2zM0 13c.5-1.500 0-3 0-5C0 4 4 3 7 0c1.500 4 2 9-2 11-1.500.7-3 .5-5 2z" fill="#222" />
          <path d="M9 4.500c1 2 .5 4-1.500 6M13 4v6.500" stroke="#222" strokeWidth="1.400" fill="none" />
        </Ico>
        <Stack $w={94.5} $ml={0} $align="flex-end">
          <Text $size={14.5} $ls={-0.1}>20:50</Text>
          <Text $size={14.5} $ls={0.05}>23-01-2024</Text>
        </Stack>
        <Badge $ml={9.5}>2</Badge>
      </Taskbar>
    </Screen>
  );
}
